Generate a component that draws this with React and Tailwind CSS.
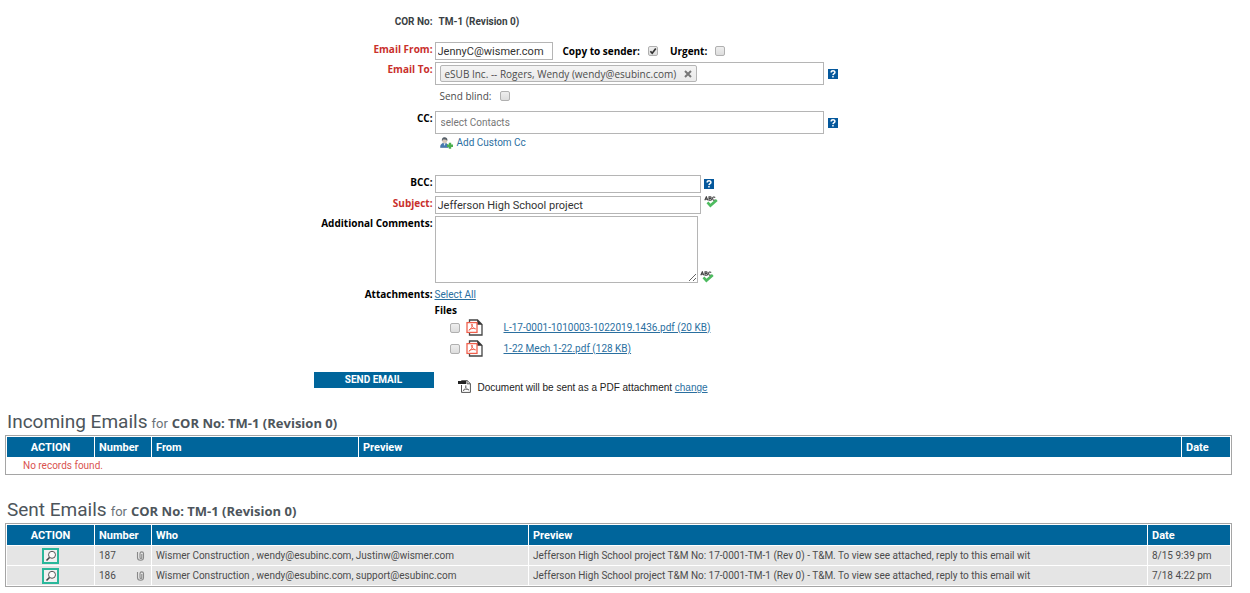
const sentEmails = [
  {
    number: 187,
    who: "Wismer Construction , wendy@esubinc.com, Justinw@wismer.com",
    preview:
      "Jefferson High School project T&M No: 17-0001-TM-1 (Rev 0) - T&M. To view see attached, reply to this email wit",
    date: "8/15 9:39 pm",
  },
  {
    number: 186,
    who: "Wismer Construction , wendy@esubinc.com, support@esubinc.com",
    preview:
      "Jefferson High School project T&M No: 17-0001-TM-1 (Rev 0) - T&M. To view see attached, reply to this email wit",
    date: "7/18 4:22 pm",
  },
];

const files = [
  { id: "file-1", name: "L-17-0001-1010003-1022019.1436.pdf (20 KB)" },
  { id: "file-2", name: "1-22 Mech 1-22.pdf (128 KB)" },
];

function Row({ label, htmlFor, required, className = "", children }) {
  return (
    <div className={`flex items-start gap-0.5 ${className}`}>
      <div className="w-[119px] shrink-0 flex justify-end">
        {label && (
          <label
            htmlFor={htmlFor}
            className={`font-['Open_Sans',sans-serif] font-bold leading-[14px] whitespace-nowrap ${
              required ? "text-[#c9302c]" : "text-black"
            }`}
          >
            {label}
          </label>
        )}
      </div>
      <div className="flex-1 min-w-0">{children}</div>
    </div>
  );
}

function Checkbox({ id, ...props }) {
  return (
    <span className="grid shrink-0">
      <input
        type="checkbox"
        id={id}
        className="peer [grid-area:1/1] appearance-none size-2.5 rounded-xs border border-[#b0b0b0] bg-linear-to-b from-[#eee] to-[#ddd]"
        {...props}
      />
      <svg
        viewBox="0 0 10 10"
        className="[grid-area:1/1] size-2.5 pointer-events-none invisible peer-checked:visible"
      >
        <path d="M2.4 5.2 4.2 7.2 7.8 2.4" fill="none" stroke="#333" strokeWidth="1.7" />
      </svg>
    </span>
  );
}

function HelpButton() {
  return (
    <button
      type="button"
      aria-label="Help"
      className="size-2.5 shrink-0 bg-[#05589c] flex items-center justify-center"
    >
      <svg viewBox="0 0 10 10" className="size-2.5">
        <path
          d="M3.2 3.5C3.2 1.3 6.9 1.3 6.9 3.4 6.9 4.7 5.2 4.7 5 6.2"
          fill="none"
          stroke="#fff"
          strokeWidth="1.5"
        />
        <rect x="4.2" y="7" width="1.5" height="1.5" fill="#fff" />
      </svg>
    </button>
  );
}

function SpellCheckButton() {
  return (
    <button type="button" aria-label="Check spelling" className="shrink-0">
      <svg viewBox="0 0 14 12" className="w-3.5 h-3 block">
        <g fill="none" stroke="#444" strokeWidth="1.1">
          <path d="M.8 4.3 2.3.8 3.8 4.3M1.4 3.2h1.8" />
          <path d="M5 .9v3.3h1.5c1.3 0 1.3-1.6 0-1.7H5h1.3C7.5 2.4 7.4.9 6.3.9Z" />
          <path d="M11.2 1.5C10 .4 8.5 1.2 8.6 2.6c0 1.6 1.6 2.1 2.6 1.200" />
        </g>
        <path d="M3.5 6.400 6.400 9.600 12.800 4" fill="none" stroke="#4dbb5f" strokeWidth="2.600" />
      </svg>
    </button>
  );
}

function AddUserIcon() {
  return (
    <svg viewBox="0 0 13 12" className="w-[13px] h-3 shrink-0">
      <path d="M.5 10.5C.3 7.5 2 6 4.3 6s4.2 1.5 4 4.5Z" fill="#4679b0" stroke="#365f8d" strokeWidth=".5" />
      <path d="M3.6 6.2 4.5 9 5.6 6.2Z" fill="#e8eef5" />
      <circle cx="4.7" cy="3.7" r="2.5" fill="#d8c9bb" />
      <path d="M2 4.3C1.3.8 3.5 0 5 .3c2 .2 2.8 1.700 2.200 3.700C6.400 2.300 5 2.500 3 2.500Z" fill="#555f68" />
      <path d="M10 5.800v6M7 8.800h6" stroke="#4caf4e" strokeWidth="2.400" />
    </svg>
  );
}

function PdfIcon() {
  return (
    <svg viewBox="0 0 17 17" className="size-[17px] shrink-0">
      <path d="M3.5 3.5V1h8L16 5.5V16H3.5v-2.5" fill="#fff" stroke="#444" strokeWidth="1.3" />
      <path d="M11.2.8v5h5Z" fill="#333" />
      <rect x="1" y="3.6" width="10" height="9.8" fill="#fff" stroke="#f0604d" strokeWidth="1.3" />
      <path
        d="M5.9 5c-1.2 0-.1 3.3 3.6 4.9M6.2 5c1 1.2-1.2 5.5-3.5 6.3M3 11c1-1.3 4-2 6.5-1.2"
        fill="none"
        stroke="#f0604d"
        strokeWidth="1"
      />
    </svg>
  );
}

function PdfDocIcon() {
  return (
    <svg viewBox="0 0 14 13" className="w-3.5 h-[13px] shrink-0">
      <path d="M3.5 3V.6h5.700l3.200 3v8.800H3.500V5" fill="#fff" stroke="#555" />
      <path d="M9 .6v3.200h3.400" fill="none" stroke="#555" />
      <rect x="0" y="1" width="8" height="3" fill="#222" />
      <path
        d="M7.700 5.500c-.9.500.5 3.400 3.300 4.600M8 5.500c.5 1.300-1.500 4.500-3.200 5.500M5 10.500c1-.9 3.500-1.500 6-.7"
        fill="none"
        stroke="#666"
        strokeWidth=".8"
      />
    </svg>
  );
}

function PaperclipIcon() {
  return (
    <svg viewBox="0 0 9 10" className="w-[9px] h-2.5 shrink-0">
      <path
        d="M1.5 1v5.5C1.5 10.2 7.5 10.2 7.5 6.5V2.5C7.5.3 4 .3 4 2.5v4c0 1.3 1.8 1.3 1.8 0V3"
        fill="none"
        stroke="#888"
        strokeWidth="1.1"
      />
    </svg>
  );
}

function ViewButton() {
  return (
    <button
      type="button"
      aria-label="View email"
      className="w-[17px] h-4 mx-auto border-2 border-[#2bb79b] bg-[#f1f1f1] flex items-center justify-center"
    >
      <svg viewBox="0 0 12 12" className="size-3">
        <circle cx="7" cy="4.8" r="3.5" fill="#fafafa" stroke="#555" />
        <path d="M4.5 7.5 1.5 10.6" stroke="#444" strokeWidth="1.5" />
      </svg>
    </button>
  );
}

function TableTitle({ children }) {
  return (
    <h2 className="h-[27px] pl-0.5 flex items-baseline gap-1 leading-[27px] text-[#4d555b] whitespace-nowrap">
      <span className="text-[19px] leading-[27px]">{children}</span>
      <span className="text-[13px] leading-4 text-[#6a7278]">for</span>
      <span className="font-['Open_Sans',sans-serif] font-bold text-[13px] leading-4">
        COR No: TM-1 (Revision 0)
      </span>
    </h2>
  );
}

function Th({ className = "text-left", children }) {
  return (
    <th className={`h-5 bg-[#00659b] text-white text-[11px] leading-[15px] font-bold px-1 py-0 ${className}`}>
      {children}
    </th>
  );
}

function Td({ className = "", children }) {
  return <td className={`h-[19px] bg-[#e5e5e5] px-1 py-0 ${className}`}>{children}</td>;
}

const inputClass = "h-[18px] px-0.5 border border-[#b5b5b5] bg-white text-[11px] text-[#333] block";
const tableClass =
  "w-full table-fixed border-separate border-spacing-px border border-[#a5a5a5] leading-[15px] whitespace-nowrap";
const linkClass = "text-[#2a6f9f] underline";

export default function App() {
  return (
    <div className="min-h-dvh bg-white pl-[5px] pr-[18px] pt-3.5 pb-1.5 font-[Roboto,sans-serif] text-[10px] leading-4 text-[#4c4c4c]">
      <form className="max-w-[610px] mx-auto" onSubmit={(e) => e.preventDefault()}>
        <div className="flex gap-1.5 font-bold text-[#3a3f44]">
          <span className="w-[119px] text-right">COR No:</span>
          <span>TM-1 (Revision 0)</span>
        </div>

        <Row label="Email From:" htmlFor="from" required className="mt-3">
          <div className="flex items-center">
            <input id="from" defaultValue="JennyC@wismer.com" className={`${inputClass} w-[118px]`} />
            <div className="flex items-center gap-2 ml-2.5 font-['Open_Sans',sans-serif] font-bold text-black">
              <label htmlFor="copy">Copy to sender:</label>
              <Checkbox id="copy" defaultChecked />
            </div>
            <div className="flex items-center gap-2 ml-3 font-['Open_Sans',sans-serif] font-bold text-black">
              <label htmlFor="urgent">Urgent:</label>
              <Checkbox id="urgent" />
            </div>
          </div>
        </Row>

        <Row label="Email To:" htmlFor="to" required className="mt-0.5">
          <div className="flex items-center gap-1">
            <div className="w-[389px] h-[23px] px-1 flex items-center border border-[#b5b5b5]">
              <span className="h-[17px] px-1 flex items-center gap-2 shrink-0 border border-[#b5b5b5] rounded-xs bg-linear-to-b from-[#f4f4f4] to-[#eaeaea] font-['Open_Sans',sans-serif]">
                eSUB Inc. -- Rogers, Wendy (wendy@esubinc.com)
                <button type="button" aria-label="Remove contact">
                  <svg viewBox="0 0 8 8" className="size-2 block">
                    <path d="M1 1 7 7M7 1 1 7" stroke="#777" strokeWidth="2" />
                  </svg>
                </button>
              </span>
              <input id="to" className="flex-1 min-w-0 outline-none" />
            </div>
            <HelpButton />
          </div>
        </Row>

        <Row className="mt-[3px]">
          <div className="flex items-center gap-2 pl-[5px] font-['Open_Sans',sans-serif]">
            <label htmlFor="blind">Send blind:</label>
            <Checkbox id="blind" />
          </div>
        </Row>

        <Row label="CC:" htmlFor="cc" className="mt-[7px]">
          <div className="flex items-center gap-1">
            <input
              id="cc"
              placeholder="select Contacts"
              className="w-[389px] h-[23px] px-[5px] border border-[#b5b5b5] placeholder:text-[#777]"
            />
            <HelpButton />
          </div>
          <a href="#add-cc" className="flex w-fit items-center gap-1 ml-[5px] mt-px text-[#2a6f9f]">
            <AddUserIcon />
            Add Custom Cc
          </a>
        </Row>

        <Row label="BCC:" htmlFor="bcc" className="mt-6">
          <div className="flex items-center gap-[3px]">
            <input id="bcc" className={`${inputClass} w-[266px]`} />
            <HelpButton />
          </div>
        </Row>

        <Row label="Subject:" htmlFor="subject" required className="mt-[3px]">
          <div className="flex items-start gap-[3px]">
            <input
              id="subject"
              defaultValue="Jefferson High School project"
              className={`${inputClass} w-[266px]`}
            />
            <SpellCheckButton />
          </div>
        </Row>

        <Row label="Additional Comments:" htmlFor="comments" className="mt-0.5">
          <div className="flex items-end gap-0.5">
            <textarea id="comments" className="w-[263px] h-[67px] border border-[#b5b5b5] block resize" />
            <SpellCheckButton />
          </div>
        </Row>

        <Row label="Attachments:" htmlFor="file-1" className="mt-1">
          <a href="#select-all" className={`block w-fit ${linkClass}`}>
            Select All
          </a>
          <div className="font-['Open_Sans',sans-serif] font-bold leading-[14px] text-black">Files</div>
          {files.map((file) => (
            <div key={file.id} className="flex items-center h-[21px] pl-[15px]">
              <Checkbox id={file.id} aria-label={file.name} />
              <span className="ml-1.5 mr-[21px]">
                <PdfIcon />
              </span>
              <a href={`#${file.id}`} className={linkClass}>
                {file.name}
              </a>
            </div>
          ))}
        </Row>

        <div className="flex items-start mt-[13px]">
          <button type="submit" className="w-[120px] h-4 bg-[#00659b] text-white font-bold">
            SEND EMAIL
          </button>
          <div className="flex items-start gap-1.5 ml-6 mt-2 leading-4 text-[#222] font-['Liberation_Sans',sans-serif]">
            <PdfDocIcon />
            <span>
              Document will be sent as a PDF attachment{" "}
              <a href="#change" className={linkClass}>
                change
              </a>
            </span>
          </div>
        </div>
      </form>

      <section className="mt-3">
        <TableTitle>Incoming Emails</TableTitle>
        <table className={tableClass}>
          <thead>
            <tr>
              <Th className="w-[87px] text-center">ACTION</Th>
              <Th className="w-14 text-left">Number</Th>
              <Th className="w-[206px] text-left">From</Th>
              <Th>Preview</Th>
              <Th className="w-12 text-left">Date</Th>
            </tr>
          </thead>
          <tbody>
            <tr>
              <td colSpan={5} className="py-0 pl-4 text-[#d9534f]">
                No records found.
              </td>
            </tr>
          </tbody>
        </table>
      </section>

      <section className="mt-[21px]">
        <TableTitle>Sent Emails</TableTitle>
        <table className={tableClass}>
          <thead>
            <tr>
              <Th className="w-[87px] text-center">ACTION</Th>
              <Th className="w-14 text-left">Number</Th>
              <Th className="w-[376px] text-left">Who</Th>
              <Th>Preview</Th>
              <Th className="w-[82px] text-left">Date</Th>
            </tr>
          </thead>
          <tbody>
            {sentEmails.map((email) => (
              <tr key={email.number}>
                <Td>
                  <ViewButton />
                </Td>
                <Td>
                  <div className="flex items-center justify-between pr-0.5">
                    {email.number}
                    <PaperclipIcon />
                  </div>
                </Td>
                <Td>{email.who}</Td>
                <Td>{email.preview}</Td>
                <Td>{email.date}</Td>
              </tr>
            ))}
          </tbody>
        </table>
      </section>
    </div>
  );
}
